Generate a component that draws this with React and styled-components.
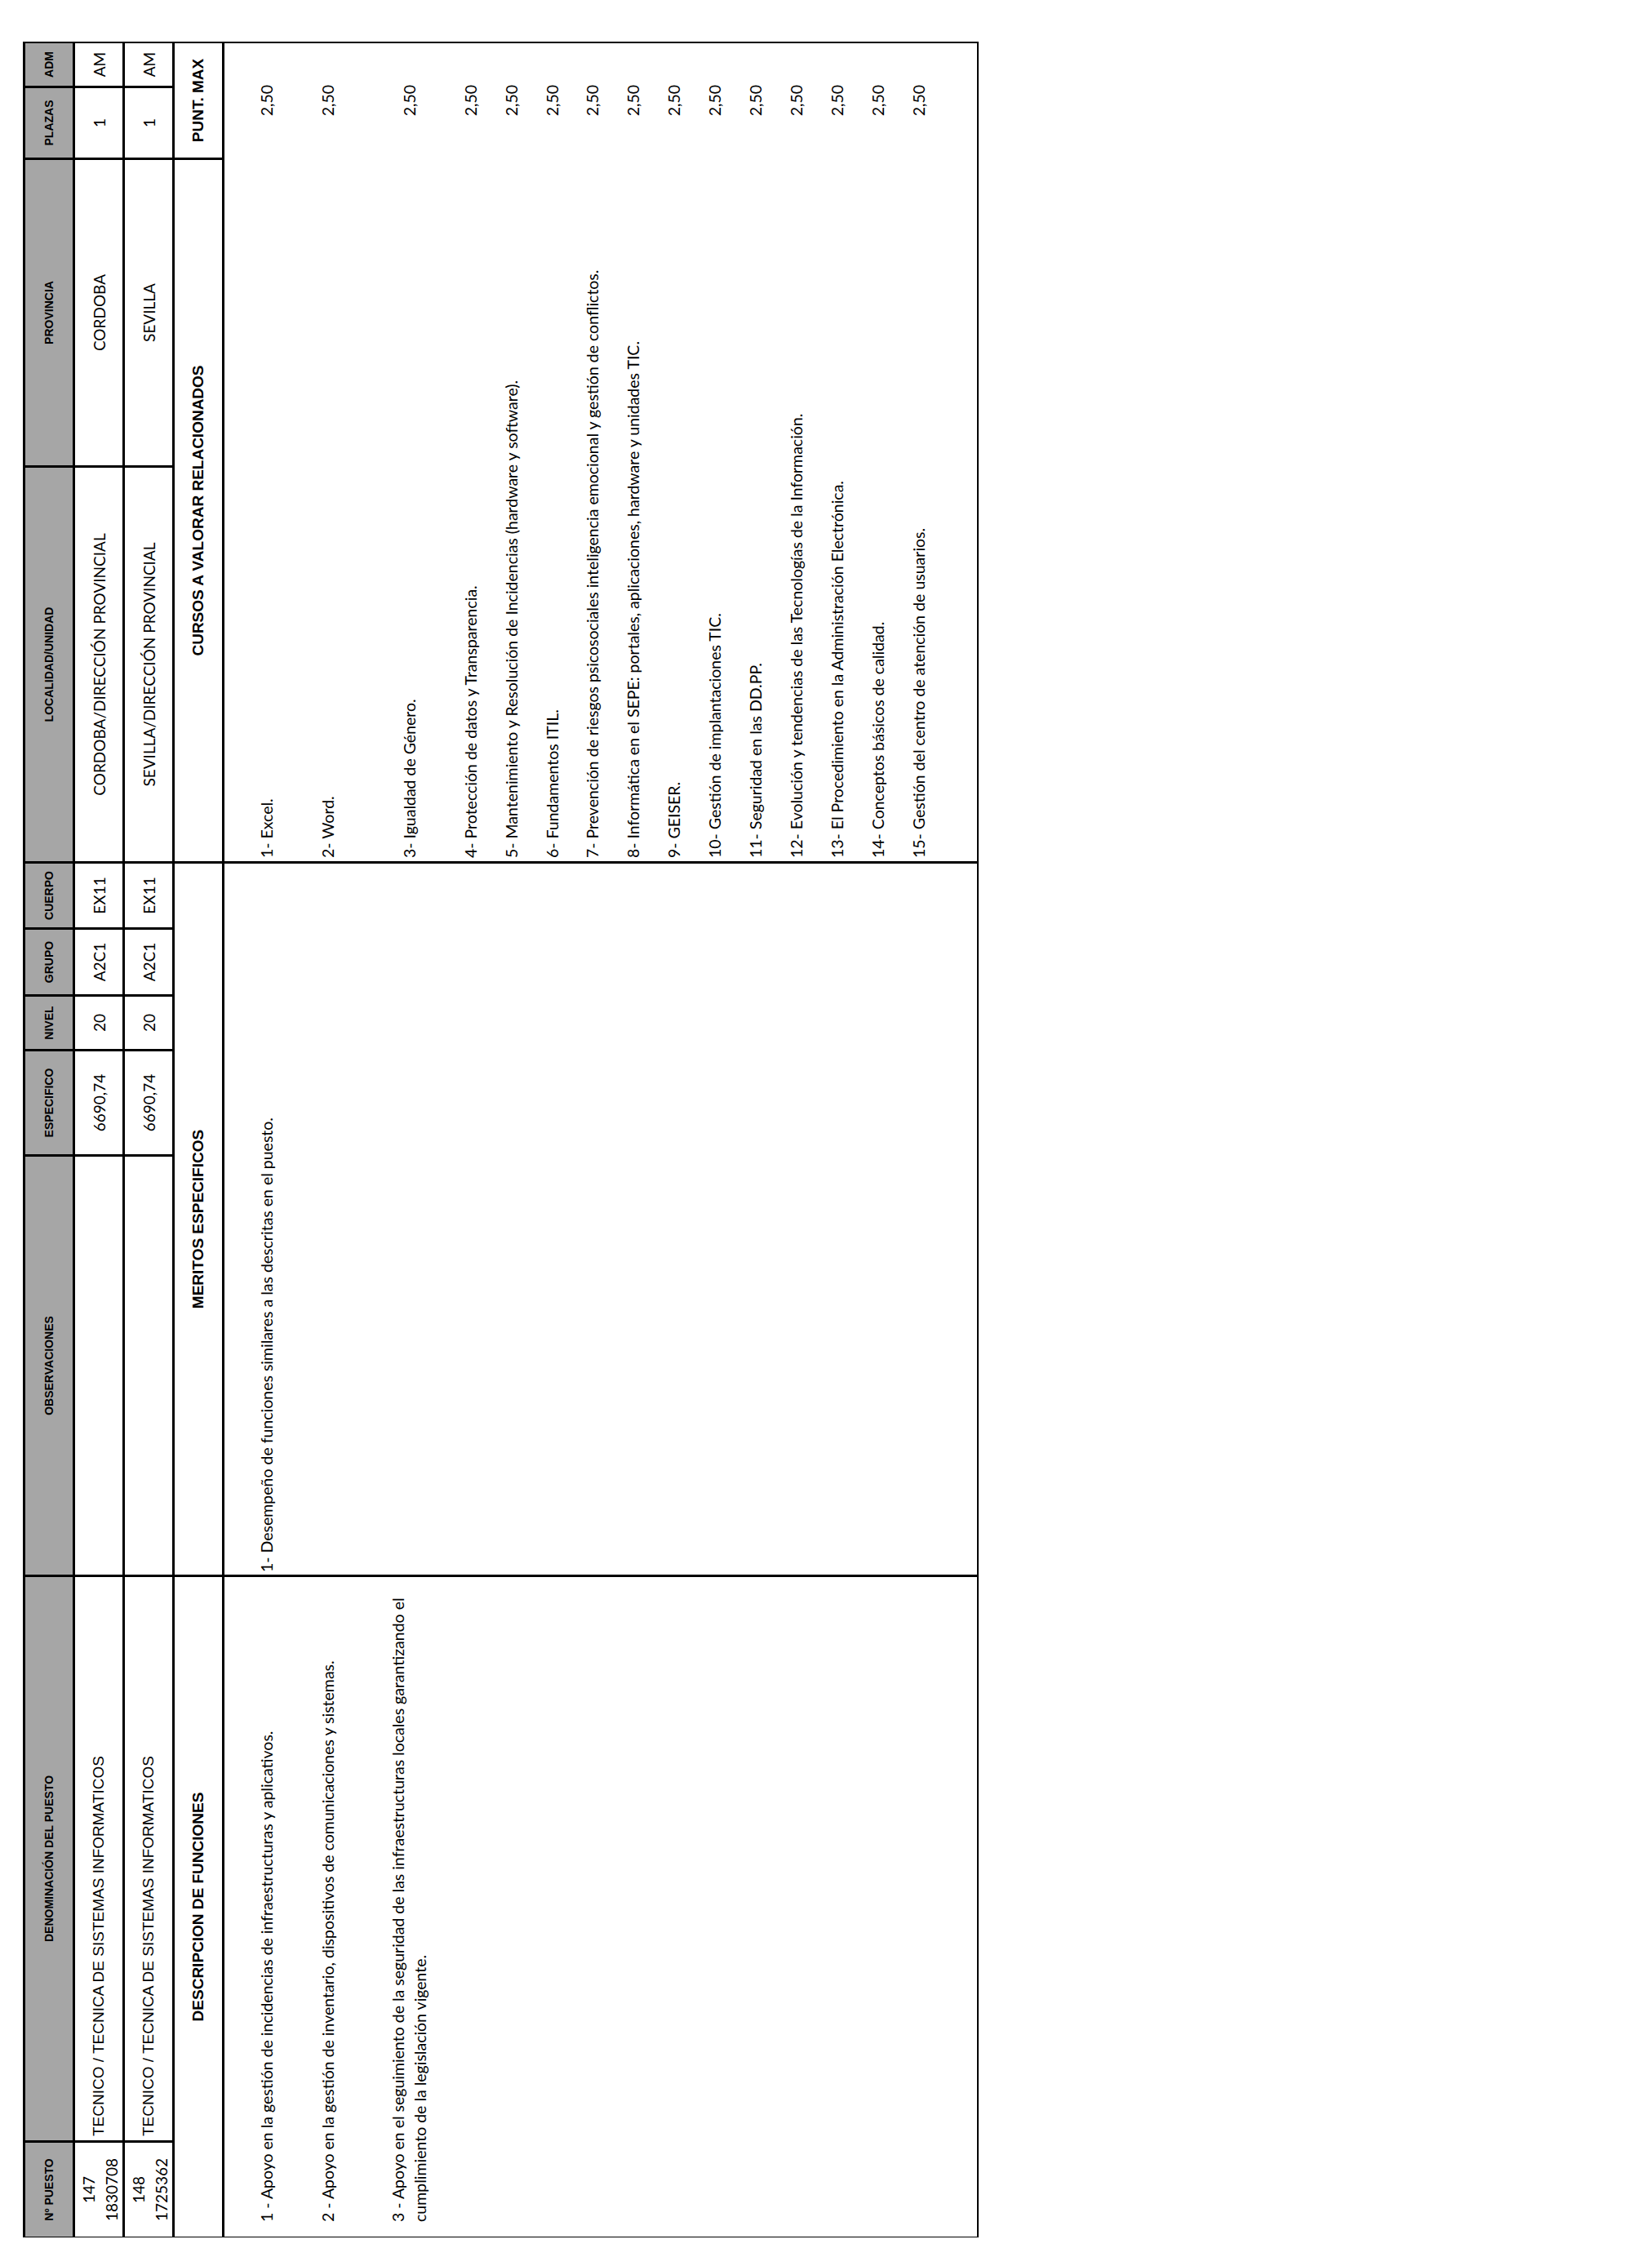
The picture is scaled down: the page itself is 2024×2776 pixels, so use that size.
import React from "react";
import styled, { createGlobalStyle } from "styled-components";

// Sheet is drawn landscape and turned a quarter turn, as in the printed page
const COLS = [115, 690, 512, 126, 64, 79, 78, 482, 374, 85, 52];
const SHEET_W = 2690;
const SHEET_H = 1171;

const HEADERS = [
  "Nº PUESTO",
  "DENOMINACIÓN DEL PUESTO",
  "OBSERVACIONES",
  "ESPECIFICO",
  "NIVEL",
  "GRUPO",
  "CUERPO",
  "LOCALIDAD/UNIDAD",
  "PROVINCIA",
  "PLAZAS",
  "ADM",
];

const PUESTOS = [
  {
    num: "147",
    code: "1830708",
    name: "TECNICO / TECNICA DE SISTEMAS INFORMATICOS",
    esp: "6690,74",
    nivel: "20",
    grupo: "A2C1",
    cuerpo: "EX11",
    unidad: "CORDOBA/DIRECCIÓN PROVINCIAL",
    provincia: "CORDOBA",
    plazas: "1",
    adm: "AM",
  },
  {
    num: "148",
    code: "1725362",
    name: "TECNICO / TECNICA DE SISTEMAS INFORMATICOS",
    esp: "6690,74",
    nivel: "20",
    grupo: "A2C1",
    cuerpo: "EX11",
    unidad: "SEVILLA/DIRECCIÓN PROVINCIAL",
    provincia: "SEVILLA",
    plazas: "1",
    adm: "AM",
  },
];

const ROW_H = [75, 100, 75, 50, 50, 49.5, 50, 49.5, 50, 50.5, 49.5, 50.5, 50, 49.5, 50];

const FUNCIONES = [
  ["1 - Apoyo en la gestión de incidencias de infraestructuras y aplicativos."],
  ["2 - Apoyo en la gestión de inventario, dispositivos de comunicaciones y sistemas."],
  [
    "3 - Apoyo en el seguimiento de la seguridad de las infraestructuras locales garantizando el",
    "cumplimiento de la legislación vigente.",
  ],
];

const MERITOS = ["1- Desempeño de funciones similares a las descritas en el puesto."];

const CURSOS = [
  "1- Excel.",
  "2- Word.",
  "3- Igualdad de Género.",
  "4- Protección de datos y Transparencia.",
  "5- Mantenimiento y Resolución de Incidencias (hardware y software).",
  "6- Fundamentos ITIL.",
  "7- Prevención de riesgos psicosociales inteligencia emocional y gestión de conflictos.",
  "8- Informática en el SEPE: portales, aplicaciones, hardware y unidades TIC.",
  "9- GEISER.",
  "10- Gestión de implantaciones TIC.",
  "11- Seguridad en las DD.PP.",
  "12- Evolución y tendencias de las Tecnologías de la Información.",
  "13- El Procedimiento en la Administración Electrónica.",
  "14- Conceptos básicos de calidad.",
  "15- Gestión del centro de atención de usuarios.",
];

export default function App() {
  return (
    <>
      <GlobalStyle />
      <Page>
        <Stage>
          <Sheet>
            {HEADERS.map((h) => (
              <HeadCell key={h}>{h}</HeadCell>
            ))}

            {PUESTOS.map((p) => (
              <React.Fragment key={p.num}>
                <DataCell>
                  <Stack>
                    <span>{p.num}</span>
                    <span>{p.code}</span>
                  </Stack>
                </DataCell>
                <DataCell $left $arial>
                  {p.name}
                </DataCell>
                <DataCell />
                <DataCell>{p.esp}</DataCell>
                <DataCell>{p.nivel}</DataCell>
                <DataCell>{p.grupo}</DataCell>
                <DataCell>{p.cuerpo}</DataCell>
                <DataCell>{p.unidad}</DataCell>
                <DataCell>{p.provincia}</DataCell>
                <DataCell>{p.plazas}</DataCell>
                <DataCell>{p.adm}</DataCell>
              </React.Fragment>
            ))}

            <SectionCell $span={2}>DESCRIPCION DE FUNCIONES</SectionCell>
            <SectionCell $span={5}>MERITOS ESPECIFICOS</SectionCell>
            <SectionCell $span={2}>CURSOS A VALORAR RELACIONADOS</SectionCell>
            <SectionCell $span={2}>PUNT. MAX</SectionCell>

            <ContentCell $span={2}>
              {FUNCIONES.map((lines, i) => (
                <Line key={i} $h={ROW_H[i]}>
                  <Funcion>
                    {lines.map((l) => (
                      <div key={l}>{l}</div>
                    ))}
                  </Funcion>
                </Line>
              ))}
            </ContentCell>

            <ContentCell $span={5}>
              {MERITOS.map((m, i) => (
                <Line key={m} $h={ROW_H[i]}>
                  <Merito>{m}</Merito>
                </Line>
              ))}
            </ContentCell>

            <ContentCell $span={4}>
              {CURSOS.map((c, i) => (
                <Line key={c} $h={ROW_H[i]}>
                  <Course>{c}</Course>
                  <Points>2,50</Points>
                </Line>
              ))}
            </ContentCell>
          </Sheet>
        </Stage>
      </Page>
    </>
  );
}

const GlobalStyle = createGlobalStyle`
  html, body {
    margin: 0;
    padding: 0;
    background: #ffffff;
    overflow: hidden;
  }
  body {
    font-family: "Lato", "Liberation Sans", sans-serif;
    color: #000;
  }
`;

const Page = styled.div`
  padding: 51px 0 0 28px;
`;

const Stage = styled.div`
  width: ${SHEET_H}px;
  height: ${SHEET_W}px;
`;

const Sheet = styled.div`
  box-sizing: border-box;
  width: ${SHEET_W}px;
  height: ${SHEET_H}px;
  transform-origin: 0 0;
  transform: translateY(${SHEET_W}px) rotate(-90deg);
  display: grid;
  grid-template-columns: ${COLS.map((c) => `${c}px`).join(" ")};
  grid-template-rows: 58px 58px 58px 58px 1fr;
  gap: 3px;
  padding: 3px 2px 2px 1px;
  background: #000;
`;

const HeadCell = styled.div`
  background: #a6a6a6;
  display: flex;
  align-items: center;
  justify-content: center;
  font-family: "Liberation Sans", Arial, sans-serif;
  font-weight: bold;
  font-size: 14px;
  white-space: nowrap;
`;

const DataCell = styled.div`
  background: #fff;
  display: flex;
  align-items: center;
  justify-content: ${(p) => (p.$left ? "flex-start" : "center")};
  padding-left: ${(p) => (p.$left ? "5px" : "0")};
  font-family: ${(p) =>
    p.$arial ? '"Liberation Sans", Arial, sans-serif' : '"Lato", sans-serif'};
  font-size: 19px;
  white-space: nowrap;
  overflow: hidden;
`;

const Stack = styled.div`
  display: flex;
  flex-direction: column;
  align-items: center;
  line-height: 28px;
  margin-top: 3px;
`;

const SectionCell = styled.div`
  grid-column: span ${(p) => p.$span};
  background: #fff;
  display: flex;
  align-items: center;
  justify-content: center;
  font-family: "Liberation Sans", Arial, sans-serif;
  font-weight: bold;
  font-size: 19px;
  white-space: nowrap;
`;

const ContentCell = styled.div`
  grid-column: span ${(p) => p.$span};
  background: #fff;
  display: flex;
  flex-direction: column;
  padding-top: 26px;
  font-family: "Lato", sans-serif;
  font-size: 19.5px;
  overflow: hidden;
`;

const Line = styled.div`
  flex: none;
  height: ${(p) => p.$h}px;
  display: flex;
  align-items: flex-start;
`;

const Funcion = styled.div`
  height: 50px;
  display: flex;
  flex-direction: column;
  justify-content: center;
  padding-left: 18px;
  line-height: 27px;
  white-space: nowrap;
`;

const Merito = styled.div`
  height: 50px;
  display: flex;
  align-items: center;
  padding-left: 3px;
  white-space: nowrap;
`;

const Course = styled.div`
  flex: 1;
  height: 50px;
  display: flex;
  align-items: center;
  padding-left: 4px;
  white-space: nowrap;
`;

const Points = styled.div`
  width: 140px;
  height: 50px;
  display: flex;
  align-items: center;
  justify-content: center;
`;
